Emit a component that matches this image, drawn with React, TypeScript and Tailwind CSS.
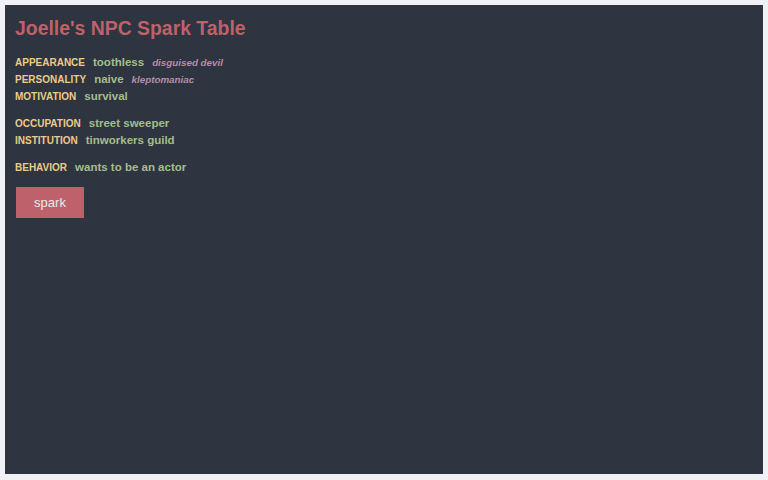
import React from "react";

const groups = [
  [
    { label: "APPEARANCE", value: "toothless", extra: "disguised devil" },
    { label: "PERSONALITY", value: "naive", extra: "kleptomaniac" },
    { label: "MOTIVATION", value: "survival" },
  ],
  [
    { label: "OCCUPATION", value: "street sweeper" },
    { label: "INSTITUTION", value: "tinworkers guild" },
  ],
  [{ label: "BEHAVIOR", value: "wants to be an actor" }],
];

export default function App() {
  return (
    <div className="h-screen w-full bg-[#eff1f5] pt-[5px] px-[5px] pb-[6px] flex font-['Liberation_Sans',Arial,sans-serif]">
      <div className="flex-1 bg-[#2e3440] px-[10px] pt-[10px]">
        {/* Title */}
        <h1 className="text-[19.4px] leading-[26px] font-bold text-[#bf616a]">
          Joelle's NPC Spark Table
        </h1>

        {/* Spark rows */}
        <div className="mt-[13px] flex flex-col gap-[10px]">
          {groups.map((rows, i) => (
            <div key={i} className="flex flex-col">
              {rows.map((row) => (
                <div key={row.label} className="flex items-baseline gap-2 h-[17px]">
                  <span className="text-[10px] font-bold text-[#ebcb8b]">{row.label}</span>
                  <span className="text-[11.5px] font-bold text-[#a3be8c]">{row.value}</span>
                  {row.extra && (
                    <span className="text-[9.8px] font-bold italic text-[#b48ead]">{row.extra}</span>
                  )}
                </div>
              ))}
            </div>
          ))}
        </div>

        <button className="mt-[11px] ml-px w-[68px] h-[31px] bg-[#bf616a] text-[#e5e9f0] text-[13px]">
          spark
        </button>
      </div>
    </div>
  );
}
